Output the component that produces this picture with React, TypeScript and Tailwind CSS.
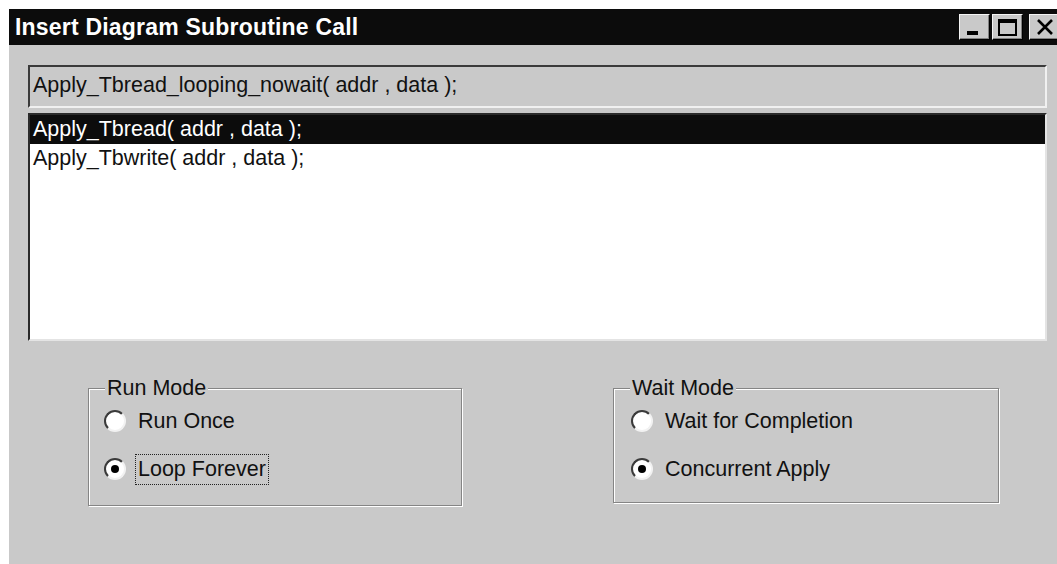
import React from "react";

type RadioProps = {
  label: string;
  checked?: boolean;
  focused?: boolean;
};

const Radio: React.FC<RadioProps> = ({ label, checked, focused }) => {
  return (
    <div className="flex items-center h-[22px]">
      <div className="w-[22px] h-[22px] rounded-full bg-white border-2 border-t-[#3a3a3a] border-l-[#3a3a3a] border-b-[#f2f2f2] border-r-[#f2f2f2] flex items-center justify-center shrink-0">
        {checked && <div className="w-[8px] h-[8px] rounded-full bg-black" />}
      </div>
      <span
        className={`ml-[9px] px-[2px] leading-[29px] border border-dotted ${
          focused ? "border-[#222]" : "border-transparent"
        }`}
      >
        {label}
      </span>
    </div>
  );
};

type GroupProps = {
  title: string;
  width: string;
  height: string;
  padLeft: string;
  children: React.ReactNode;
};

const GroupBox: React.FC<GroupProps> = ({ title, width, height, padLeft, children }) => {
  return (
    <div
      className={`relative ${width} ${height} ${padLeft} border border-[#858585] shadow-[inset_1px_1px_0_#fff,1px_1px_0_#fff] pt-[21px] flex flex-col gap-[26px]`}
    >
      {/* caption sits over the top edge of the frame */}
      <span className="absolute -top-[14px] left-[16px] px-[2px] bg-[#c9c9c9] leading-[26px]">
        {title}
      </span>
      {children}
    </div>
  );
};

const TitleButton: React.FC<{ children: React.ReactNode }> = ({ children }) => (
  <div className="w-[31px] h-[26px] bg-[#c9c9c9] border-t border-l border-t-[#f4f4f4] border-l-[#f4f4f4] border-b border-r border-b-black border-r-black shadow-[inset_-1px_-1px_0_#808080] flex items-center justify-center">
    {children}
  </div>
);

export default function App() {
  const items = ["Apply_Tbread( addr , data );", "Apply_Tbwrite( addr , data );"];

  return (
    <div className="w-[1057px] h-[564px] bg-white pl-[9px] pt-[9px] overflow-hidden font-['Liberation_Sans',Arial,sans-serif] text-[21.5px] text-[#111]">
      <div className="w-[1050px] h-full bg-[#c9c9c9] flex flex-col">
        {/* title bar */}
        <div className="h-[36px] bg-[#0c0c0c] flex items-center pl-[6px]">
          <span className="text-white font-bold text-[23px] tracking-[0.2px]">
            Insert Diagram Subroutine Call
          </span>
          <div className="ml-auto flex items-center gap-[2px] mr-[-1px]">
            <TitleButton>
              <div className="w-[11px] h-[4px] bg-black mt-[12px] mr-[4px]" />
            </TitleButton>
            <TitleButton>
              <div className="w-[19px] h-[17px] border-2 border-t-[4px] border-black" />
            </TitleButton>
            <div className="w-[2px]" />
            <TitleButton>
              <svg width="18" height="16" viewBox="0 0 18 16">
                <path d="M2 1 L16 15 M16 1 L2 15" stroke="#000" strokeWidth="2.6" />
              </svg>
            </TitleButton>
          </div>
        </div>

        <div className="flex-1 pl-[19px] pr-[12px] pt-[20px] flex flex-col">
          {/* edit line */}
          <div className="h-[43px] border-t-2 border-l-2 border-t-[#3a3a3a] border-l-[#3a3a3a] border-b-2 border-r-2 border-b-[#f0f0f0] border-r-[#f0f0f0] bg-[#c9c9c9] flex items-center pl-[3px] pb-[3px]">
            Apply_Tbread_looping_nowait( addr , data );
          </div>

          {/* list box */}
          <div className="mt-[5px] h-[228px] bg-white border-t-2 border-l-2 border-t-[#2a2a2a] border-l-[#2a2a2a] border-b-2 border-r-2 border-b-[#e4e4e4] border-r-[#e4e4e4]">
            {items.map((item, i) => (
              <div
                key={item}
                className={`h-[29px] leading-[29px] pl-[3px] ${
                  i === 0 ? "bg-[#0c0c0c] text-white" : ""
                }`}
              >
                {item}
              </div>
            ))}
          </div>

          {/* option groups */}
          <div className="mt-[47px] pl-[60px] flex items-start">
            <GroupBox title="Run Mode" width="w-[374px]" height="h-[118px]" padLeft="pl-[15px]">
              <Radio label="Run Once" />
              <Radio label="Loop Forever" checked focused />
            </GroupBox>
            <div className="ml-[151px]">
              <GroupBox title="Wait Mode" width="w-[386px]" height="h-[115px]" padLeft="pl-[17px]">
                <Radio label="Wait for Completion" />
                <Radio label="Concurrent Apply" checked />
              </GroupBox>
            </div>
          </div>
        </div>
      </div>
    </div>
  );
}
